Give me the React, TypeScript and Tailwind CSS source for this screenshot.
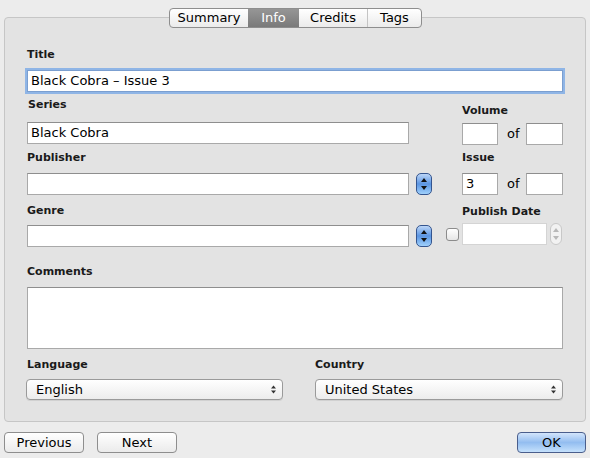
const font = { fontFamily: '"DejaVu Sans", "Liberation Sans", sans-serif' };

function Label({ children, className = "" }: { children: React.ReactNode; className?: string }) {
  return <div className={`text-[11px] font-bold leading-none text-[#1a1a1a] ${className}`}>{children}</div>;
}

function Field({ value = "", className = "", focus = false }: { value?: string; className?: string; focus?: boolean }) {
  return (
    <div
      className={`flex shrink-0 items-center bg-white px-[3px] text-[13px] text-black ${
        focus
          ? "border border-[#7b9fd0] shadow-[0_0_0_2px_#8fb5e6]"
          : "border border-[#a9a9a9] border-t-[#8e8e8e]"
      } ${className}`}
    >
      {value}
    </div>
  );
}

function Stepper({ disabled = false }: { disabled?: boolean }) {
  if (disabled) {
    return (
      <div className="flex h-[22px] w-[12px] shrink-0 flex-col items-center justify-center rounded-[6px] border border-[#c8c8c8] bg-[#f2f2f2]">
        <svg width="6" height="14" viewBox="0 0 6 14">
          <path d="M3 1 L6 5 H0 Z" fill="#b8b8b8" />
          <path d="M3 13 L6 9 H0 Z" fill="#b8b8b8" />
        </svg>
      </div>
    );
  }
  return (
    <div className="flex h-[22px] w-[16px] shrink-0 flex-col items-center justify-center rounded-[5px] border border-[#34558f] bg-gradient-to-b from-[#bcd6f7] via-[#5b95e2] to-[#9fd0fb]">
      <svg width="6" height="14" viewBox="0 0 6 14">
        <path d="M3 1 L6 5 H0 Z" fill="#111" />
        <path d="M3 13 L6 9 H0 Z" fill="#111" />
      </svg>
    </div>
  );
}

function Select({ value, className = "" }: { value: string; className?: string }) {
  return (
    <div
      className={`flex h-[21px] items-center justify-between rounded-[4px] border border-[#9a9a9a] bg-gradient-to-b from-white to-[#ececec] pl-[9px] pr-[6px] text-[13px] text-black shadow-[0_1px_0_rgba(0,0,0,0.08)] ${className}`}
    >
      <span>{value}</span>
      <svg width="5" height="9" viewBox="0 0 5 9">
        <path d="M2.5 0.5 L5 3.5 H0 Z" fill="#333" />
        <path d="M2.5 8.5 L5 5.5 H0 Z" fill="#333" />
      </svg>
    </div>
  );
}

function Button({ children, className = "", primary = false }: { children: React.ReactNode; className?: string; primary?: boolean }) {
  return (
    <div
      className={`flex h-[21px] items-center justify-center rounded-[4px] border text-[13px] text-black ${
        primary
          ? "border-[#4a5e8c] bg-gradient-to-b from-[#d3e5fb] via-[#93bdf0] to-[#c5e1fc]"
          : "border-[#8e8e8e] bg-gradient-to-b from-white to-[#ebebeb]"
      } ${className}`}
    >
      {children}
    </div>
  );
}

const tabs = [
  { name: "Summary", w: "w-[78px]" },
  { name: "Info", w: "w-[51px]" },
  { name: "Credits", w: "w-[68px]" },
  { name: "Tags", w: "w-[54px]" },
];

export default function App() {
  return (
    <div style={font} className="relative h-[458px] w-[590px] overflow-hidden bg-[#ececec] antialiased">
      <div className="px-[4px] pt-[17px]">
        <div className="h-[405px] rounded-[4px] border border-[#c6c6c6] bg-[#e3e3e3] px-[22px] pt-[31px]">
          <Label>Title</Label>
          <Field value="Black Cobra – Issue 3" focus className="mt-[10px] h-[22px] w-[536px]" />

          <div className="mt-[4px] flex">
            <div className="w-[412px] shrink-0">
              <Label className="ml-[1px] mt-[3px]">Series</Label>
              <Field value="Black Cobra" className="mt-[12px] h-[22px] w-[382px]" />
              <Label className="mt-[8px]">Publisher</Label>
              <div className="mt-[10px] flex items-center gap-[7px]">
                <Field className="h-[22px] w-[382px]" />
                <Stepper />
              </div>
              <Label className="mt-[10px]">Genre</Label>
              <div className="mt-[9px] flex items-center gap-[7px]">
                <Field className="h-[22px] w-[382px]" />
                <Stepper />
              </div>
            </div>
            <div className="ml-[23px] flex-1">
              <Label className="mt-[9px]">Volume</Label>
              <div className="mt-[7px] flex items-center">
                <Field className="h-[22px] w-[36px]" />
                <span className="ml-[9px] w-[19px] text-[13px]">of</span>
                <Field className="h-[22px] w-[37px]" />
              </div>
              <Label className="mt-[7px]">Issue</Label>
              <div className="mt-[10px] flex items-center">
                <Field value="3" className="h-[22px] w-[36px]" />
                <span className="ml-[9px] w-[19px] text-[13px]">of</span>
                <Field className="h-[22px] w-[37px]" />
              </div>
              <Label className="mt-[11px]">Publish Date</Label>
              <div className="relative mt-[6px] flex items-center">
                <div className="absolute left-[-16px] top-[5px] h-[13px] w-[13px] rounded-[3px] border border-[#8c8c8c] bg-gradient-to-b from-white to-[#e6e6e6]" />
                <div className="h-[22px] w-[85px] border border-[#d4d4d4] bg-white" />
                <div className="ml-[3px]">
                  <Stepper disabled />
                </div>
              </div>
            </div>
          </div>

          <Label className="mt-[19px]">Comments</Label>
          <Field className="mt-[10px] h-[62px] w-[536px]" />

          <div className="mt-[10px] flex">
            <div className="w-[289px]">
              <Label>Language</Label>
              <Select value="English" className="ml-[-1px] mt-[9px] w-[257px]" />
            </div>
            <div>
              <Label>Country</Label>
              <Select value="United States" className="mt-[9px] w-[248px]" />
            </div>
          </div>
        </div>
      </div>

      <div className="absolute left-[169px] top-[8px] flex h-[20px] overflow-hidden rounded-[4px] border border-[#8e8e8e] bg-gradient-to-b from-white to-[#ebebeb]">
        {tabs.map((t, i) => (
          <div
            key={t.name}
            className={`flex items-center justify-center text-[13px] ${t.w} ${
              t.name === "Info"
                ? "bg-gradient-to-b from-[#969696] to-[#7a7a7a] text-white"
                : "text-black"
            } ${i > 0 && t.name !== "Info" && tabs[i - 1].name !== "Info" ? "border-l border-[#c4c4c4]" : ""}`}
          >
            {t.name}
          </div>
        ))}
      </div>

      <div className="mt-[10px] flex px-[4px]">
        <Button className="w-[80px]">Previous</Button>
        <Button className="ml-[13px] w-[80px]">Next</Button>
        <Button primary className="ml-auto w-[69px]">OK</Button>
      </div>
    </div>
  );
}
